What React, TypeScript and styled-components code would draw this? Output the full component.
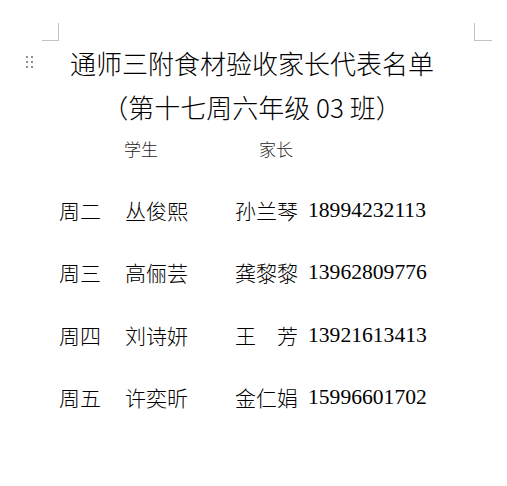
import styled, { createGlobalStyle } from 'styled-components';

const GlobalStyle = createGlobalStyle`
  html, body {
    margin: 0;
    padding: 0;
    background: #ffffff;
  }
`;

const cjk = `"Noto Sans CJK SC", "Noto Sans", sans-serif`;
const serifDigits = `"Liberation Serif", "Noto Sans CJK SC", serif`;

const Page = styled.div`
  width: 507px;
  min-height: 486px;
  box-sizing: border-box;
  padding: 23px 0 0 42px;
  background: #ffffff;
  color: #000000;
  font-family: ${cjk};
  font-weight: 300;
`;

const CornerRow = styled.div`
  display: flex;
  justify-content: space-between;
  width: 450px;
`;

const CornerMark = styled.div<{ $side: 'left' | 'right' }>`
  box-sizing: border-box;
  width: ${props => (props.$side === 'left' ? 17 : 18)}px;
  height: 18px;
  border-bottom: 1px solid #c3c3c3;
  ${props =>
    props.$side === 'left' ? 'border-right: 1px solid #c3c3c3;' : 'border-left: 1px solid #c3c3c3;'}
`;

const Body = styled.div`
  width: 416px;
  padding-left: 16px;
`;

const TitleBlock = styled.div`
  position: relative;
  padding-right: 28px;
  text-align: center;
  font-size: 26px;
  line-height: 44px;
`;

// Word's paragraph drag handle, floating in the left margin
const DragHandle = styled.div`
  position: absolute;
  left: -32px;
  top: 15px;
  display: grid;
  grid-template-columns: repeat(2, 2px);
  grid-auto-rows: 2px;
  column-gap: 3px;
  row-gap: 3px;
`;

const Dot = styled.span`
  display: block;
  width: 2px;
  height: 2px;
  background: #8f8f8f;
`;

const TitleLine = styled.div`
  white-space: pre;
`;

const Labels = styled.div`
  display: flex;
  margin-top: 8px;
  padding-left: 66px;
  font-size: 17px;
  line-height: 24px;
  color: #262626;
`;

const Label = styled.span<{ $width: number }>`
  width: ${props => props.$width}px;
`;

const Roster = styled.div`
  margin-top: 18px;
  padding-left: 1px;
`;

const Row = styled.div`
  display: grid;
  grid-template-columns: 66px 110px 73px auto;
  height: 62.33px;
  align-items: center;
  font-size: 21px;
  line-height: 62.33px;
  white-space: pre;
`;

const Phone = styled.span`
  font-family: ${serifDigits};
  font-weight: 400;
  font-size: 21.6px;
`;

const rows = [
  { day: '周二', student: '丛俊熙', parent: '孙兰琴', phone: '18994232113' },
  { day: '周三', student: '高俪芸', parent: '龚黎黎', phone: '13962809776' },
  { day: '周四', student: '刘诗妍', parent: '王　芳', phone: '13921613413' },
  { day: '周五', student: '许奕昕', parent: '金仁娟', phone: '15996601702' },
];

export default function App() {
  return (
    <Page>
      <GlobalStyle />
      <CornerRow>
        <CornerMark $side="left" />
        <CornerMark $side="right" />
      </CornerRow>
      <Body>
        <TitleBlock>
          <DragHandle>
            {Array.from({ length: 6 }).map((_, i) => (
              <Dot key={i} />
            ))}
          </DragHandle>
          <TitleLine>通师三附食材验收家长代表名单</TitleLine>
          <TitleLine>（第十七周六年级 03 班）</TitleLine>
        </TitleBlock>
        <Labels>
          <Label $width={135}>学生</Label>
          <Label $width={60}>家长</Label>
        </Labels>
        <Roster>
          {rows.map(r => (
            <Row key={r.day}>
              <span>{r.day}</span>
              <span>{r.student}</span>
              <span>{r.parent}</span>
              <Phone>{r.phone}</Phone>
            </Row>
          ))}
        </Roster>
      </Body>
    </Page>
  );
}
